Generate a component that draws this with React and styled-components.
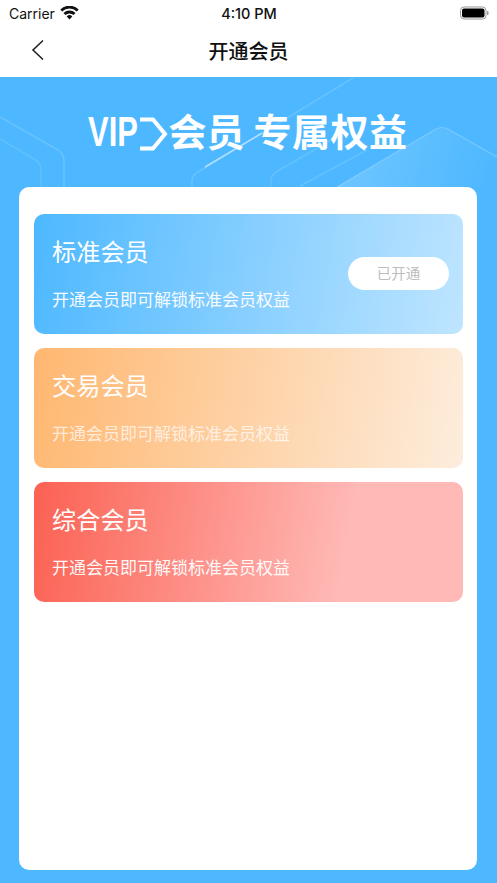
import React from "react";
import styled, { createGlobalStyle } from "styled-components";

const Global = createGlobalStyle`
  html, body { margin: 0; padding: 0; background: #fff; }
  body { font-family: "Noto Sans CJK SC", "Noto Sans", sans-serif; }
  * { box-sizing: border-box; }
`;

const Page = styled.div`
  width: 497px;
  height: 883px;
  display: flex;
  flex-direction: column;
  overflow: hidden;
`;

const StatusBar = styled.div`
  height: 26px;
  flex: none;
  padding: 0 8px 0 9px;
  display: grid;
  grid-template-columns: 1fr auto 1fr;
  align-items: center;
  font-family: Inter, Roboto, sans-serif;
  font-size: 14px;
  color: #111;
`;

const StatusLeft = styled.div`
  display: flex;
  align-items: center;
  gap: 5px;
`;

const Clock = styled.div`
  font-weight: 500;
  font-size: 14.5px;
`;

const StatusRight = styled.div`
  display: flex;
  justify-content: flex-end;
`;

const NavBar = styled.div`
  height: 51px;
  flex: none;
  position: relative;
  display: flex;
  align-items: center;
  justify-content: center;
  padding-bottom: 3px;
`;

const BackIcon = styled.svg`
  position: absolute;
  left: 31px;
  top: 13px;
`;

const NavTitle = styled.div`
  font-size: 20px;
  font-weight: 500;
  color: #111;
`;

const Banner = styled.div`
  flex: 1;
  position: relative;
  background: #4db8ff;
  padding: 0 20px 13px 19px;
  display: flex;
  flex-direction: column;
  overflow: hidden;
`;

const Deco = styled.svg`
  position: absolute;
  left: 0;
  top: 0;
`;

const Headline = styled.div`
  position: relative;
  height: 110px;
  flex: none;
  display: flex;
  align-items: center;
  justify-content: center;
  color: #fff;
  font-weight: 700;
  font-size: 38px;
  line-height: 1;
`;

const VipMark = styled.span`
  font-family: "Liberation Sans", sans-serif;
  font-weight: 700;
  font-size: 43px;
  display: inline-block;
  width: 50px;
  white-space: nowrap;
  transform: scaleX(0.72);
  transform-origin: left center;
  margin-top: -1px;
`;

const Chevron = styled.svg`
  flex: none;
  margin-top: 3px;
  overflow: visible;
`;

const HeadWord = styled.span`
  margin-left: ${(p) => p.$gap || 0}px;
  letter-spacing: ${(p) => p.$track || 0}px;
  margin-top: -4px;
`;

const Sheet = styled.div`
  position: relative;
  flex: 1;
  background: #fff;
  border-radius: 10px;
  padding: 27px 14px 0 15px;
  display: flex;
  flex-direction: column;
  gap: 14.5px;
`;

const Plan = styled.div`
  height: 119.5px;
  border-radius: 10px;
  background: ${(p) => p.$bg};
  padding: 19px 18px 0;
  position: relative;
  color: #fff;
`;

const PlanTitle = styled.div`
  font-size: 24.2px;
  line-height: 36px;
`;

const PlanText = styled.div`
  font-size: 17px;
  line-height: 26px;
  margin-top: 17px;
  opacity: ${(p) => (p.$dim ? 0.7 : 0.95)};
`;

const Opened = styled.div`
  position: absolute;
  right: 14px;
  top: 43px;
  width: 101px;
  height: 33px;
  border-radius: 17px;
  background: #fff;
  color: #bdbdbd;
  font-size: 14.5px;
  padding-bottom: 2px;
  display: flex;
  align-items: center;
  justify-content: center;
`;

const plans = [
  { name: "标准会员", bg: "linear-gradient(100deg, #4db8ff 0%, #bfe5ff 100%)", open: true },
  { name: "交易会员", bg: "linear-gradient(100deg, #ffb770 0%, #fdeddd 100%)", dim: true },
  { name: "综合会员", bg: "linear-gradient(100deg, #fb6152 0%, #ffb9b6 72%, #ffbab7 100%)" },
];

export default function App() {
  return (
    <Page>
      <Global />
      <StatusBar>
        <StatusLeft>
          Carrier
          <svg width="19" height="14" viewBox="0 0 19 14">
            <path d="M9.5 13.6 6.7 10.4a4 4 0 0 1 5.6 0Z" fill="#111" />
            <path d="M5.4 9 3.5 6.9a8.6 8.6 0 0 1 12 0L13.6 9a6 6 0 0 0-8.2 0Z" fill="#111" />
            <path d="M2.2 5.5.3 3.4a13.300 13.300 0 0 1 18.400 0l-1.900 2.100a10.600 10.600 0 0 0-14.600 0Z" fill="#111" />
          </svg>
        </StatusLeft>
        <Clock>4:10 PM</Clock>
        <StatusRight>
          <svg width="29" height="14" viewBox="0 0 29 14">
            <rect x="0.5" y="1" width="25.500" height="12" rx="3.500" fill="none" stroke="#999" />
            <rect x="2" y="2.500" width="22.500" height="9" rx="2" fill="#000" />
            <rect x="27" y="5" width="1.500" height="4" rx="0.700" fill="#999" />
          </svg>
        </StatusRight>
      </StatusBar>
      <NavBar>
        <BackIcon width="14" height="22" viewBox="0 0 14 22">
          <path d="M12 1.500 2 11l10 9.500" fill="none" stroke="#222" strokeWidth="1.600" />
        </BackIcon>
        <NavTitle>开通会员</NavTitle>
      </NavBar>
      <Banner>
        <Deco width="497" height="806" viewBox="0 0 497 806" fill="none">
          <defs>
            <linearGradient id="panel" x1="0" y1="0.5" x2="1" y2="0.6">
              <stop offset="0" stopColor="#fff" stopOpacity="0.2" />
              <stop offset="1" stopColor="#fff" stopOpacity="0" />
            </linearGradient>
          </defs>
          <path d="M0 40 58 73q6 4 6 11v40" stroke="#fff" strokeOpacity="0.16" strokeWidth="1.500" />
          <path d="M0 62 34 82q7 4 7 11v25" stroke="#fff" strokeOpacity="0.12" strokeWidth="1.500" />
          <path d="M192 110V104q0-6 6-9L353 1" stroke="#fff" strokeOpacity="0.15" strokeWidth="1.500" />
          <path d="M271 110v-6q0-6 5-9L340 58" stroke="#fff" strokeOpacity="0.13" strokeWidth="1.500" />
          <path d="M300 109 367 73" stroke="#fff" strokeOpacity="0.13" strokeWidth="1.500" />
          <path d="M337 110 436 52q6-3 12 0l49 28v30Z" fill="url(#panel)" />
          <path d="M337 110 436 52q6-3 12 0l49 28" stroke="#fff" strokeOpacity="0.22" strokeWidth="1.200" />
          <path d="M205 90 262 56" stroke="#fff" strokeOpacity="0.5" strokeWidth="1.500" />
        </Deco>
        <Headline>
          <VipMark>VIP</VipMark>
          <Chevron width="29" height="34" viewBox="0 0 29 34">
            <path d="M2 2.500H15L27 17 15 31.500H2" fill="none" stroke="#fff" strokeWidth="4" />
          </Chevron>
          <HeadWord $gap={1}>会员</HeadWord>
          <HeadWord $gap={9} $track={0.5}>专属权益</HeadWord>
        </Headline>
        <Sheet>
          {plans.map((plan) => (
            <Plan key={plan.name} $bg={plan.bg}>
              <PlanTitle>{plan.name}</PlanTitle>
              <PlanText $dim={plan.dim}>开通会员即可解锁标准会员权益</PlanText>
              {plan.open && <Opened>已开通</Opened>}
            </Plan>
          ))}
        </Sheet>
      </Banner>
    </Page>
  );
}
